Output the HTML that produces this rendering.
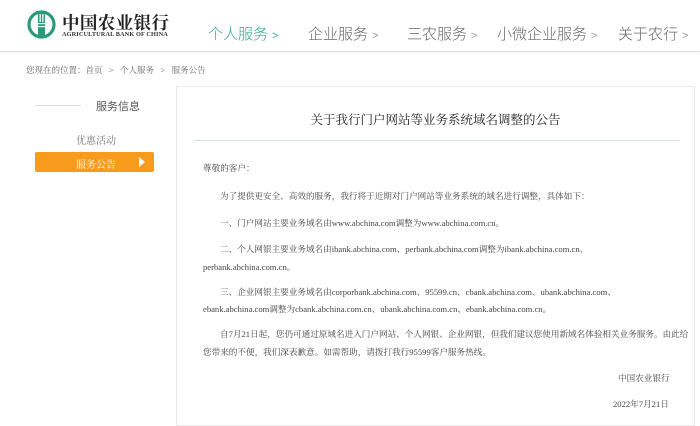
<!DOCTYPE html>
<html><head><meta charset="utf-8"><style>
*{margin:0;padding:0;box-sizing:border-box}
body{width:700px;height:412px;overflow:hidden;background:#fff;font-family:"Liberation Sans","Noto Sans CJK SC",sans-serif;position:relative}
.abs{position:absolute;white-space:nowrap}
.hdr{position:absolute;left:0;top:0;width:700px;height:52px;border-bottom:1px solid #e4e4e4;box-shadow:0 1px 2px #eee}
.nav{top:23px;font-size:15px;color:#666;font-weight:300}
.nav b{font-weight:normal;font-size:11px;color:#999;margin-left:4px}
.serif{font-family:"Liberation Serif","Noto Serif CJK SC",serif}
.p{position:absolute;left:203px;font-size:8.6px;color:#444;font-family:"Liberation Serif","Noto Serif CJK SC",serif;white-space:nowrap}
</style></head><body>
<div class="hdr"></div>
<svg class="abs" style="left:27px;top:10px" width="29" height="29" viewBox="0 0 29 29">
<circle cx="14.5" cy="14.5" r="12.5" fill="none" stroke="#2a9a78" stroke-width="3.2"/>
<rect x="11" y="2" width="7" height="25" fill="#2a9a78"/>
<rect x="12.5" y="4" width="1.3" height="8" fill="#fff"/><rect x="15.2" y="4" width="1.3" height="8" fill="#fff"/>
<rect x="11" y="13" width="7" height="1.2" fill="#fff"/><rect x="11" y="16" width="7" height="1.2" fill="#fff"/>
</svg>
<div class="abs serif" style="left:62px;top:10px;font-size:17.5px;font-weight:bold;color:#222;letter-spacing:0.4px">中国农业银行</div>
<div class="abs serif" style="left:62px;top:31px;font-size:6.3px;font-weight:bold;color:#333;letter-spacing:0.1px">AGRICULTURAL BANK OF CHINA</div>
<div class="abs nav" style="left:208px;color:#3aa58e">个人服务<b style="color:#3aa58e">&gt;</b></div>
<div class="abs nav" style="left:308px">企业服务<b>&gt;</b></div>
<div class="abs nav" style="left:407px">三农服务<b>&gt;</b></div>
<div class="abs nav" style="left:497px">小微企业服务<b>&gt;</b></div>
<div class="abs nav" style="left:618px">关于农行<b>&gt;</b></div>
<div class="abs serif" style="left:26px;top:64px;font-size:8.5px;color:#666">您现在的位置：首页 &nbsp;&nbsp;&gt;&nbsp;&nbsp; 个人服务 &nbsp;&nbsp;&gt;&nbsp;&nbsp; 服务公告</div>
<div class="abs" style="left:35px;top:105px;width:46px;height:1px;background:#ddd"></div>
<div class="abs" style="left:96px;top:98px;font-size:11px;color:#555">服务信息</div>
<div class="abs serif" style="left:76px;top:132px;font-size:10px;color:#777">优惠活动</div>
<div class="abs" style="left:35px;top:152px;width:119px;height:20px;background:#f89b1c;border-radius:2px"></div>
<div class="abs serif" style="left:76px;top:156px;font-size:10px;color:#fff">服务公告</div>
<div class="abs" style="left:139px;top:157px;width:0;height:0;border-left:6px solid #fff;border-top:5px solid transparent;border-bottom:5px solid transparent"></div>
<div class="abs" style="left:176px;top:86px;width:519px;height:340px;border:1px solid #eaeaea"></div>
<div class="abs serif" style="left:176px;top:110px;width:519px;text-align:center;font-size:12.5px;color:#222">关于我行门户网站等业务系统域名调整的公告</div>
<div class="abs" style="left:194px;top:140px;width:486px;height:1px;background:#cfe6df"></div>
<div class="p" style="top:162px">尊敬的客户：</div>
<div class="p" style="top:190px;left:220px">为了提供更安全、高效的服务，我行将于近期对门户网站等业务系统的域名进行调整，具体如下：</div>
<div class="p" style="top:217px;left:220px">一、门户网站主要业务域名由www.abchina.com调整为www.abchina.com.cn。</div>
<div class="p" style="top:243px;left:220px">二、个人网银主要业务域名由ibank.abchina.com、perbank.abchina.com调整为ibank.abchina.com.cn、</div>
<div class="p" style="top:261px">perbank.abchina.com.cn。</div>
<div class="p" style="top:286px;left:220px">三、企业网银主要业务域名由corporbank.abchina.com、95599.cn、cbank.abchina.com、ubank.abchina.com、</div>
<div class="p" style="top:303px">ebank.abchina.com调整为cbank.abchina.com.cn、ubank.abchina.com.cn、ebank.abchina.com.cn。</div>
<div class="p" style="top:328px;left:220px">自7月21日起，您仍可通过原域名进入门户网站、个人网银、企业网银，但我们建议您使用新域名体验相关业务服务。由此给</div>
<div class="p" style="top:346px">您带来的不便，我们深表歉意。如需帮助，请拨打我行95599客户服务热线。</div>
<div class="p" style="top:372px;left:618px">中国农业银行</div>
<div class="p" style="top:398px;left:613px">2022年7月21日</div>
</body></html>
